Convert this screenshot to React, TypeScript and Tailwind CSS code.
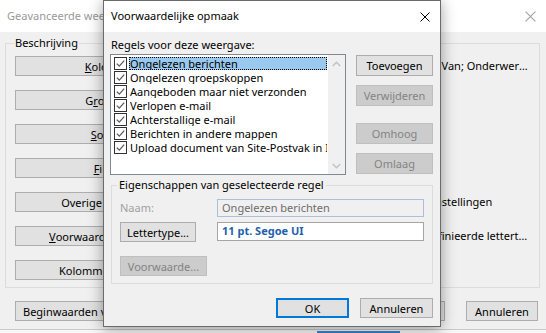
import React from "react";

const FONT = "font-['Noto_Sans',sans-serif]";

function Btn({
  children,
  className = "",
  disabled = false,
  primary = false,
}: {
  children: React.ReactNode;
  className?: string;
  disabled?: boolean;
  primary?: boolean;
}) {
  const tone = disabled
    ? "bg-[#cccccc] border border-[#bfbfbf] text-[#838383]"
    : primary
    ? "bg-[#e1e1e1] border-2 border-[#0078d7] text-black"
    : "bg-[#e1e1e1] border border-[#adadad] text-black";
  return (
    <div
      className={`flex items-center justify-center whitespace-nowrap overflow-hidden text-[11px] leading-none ${tone} ${className}`}
    >
      {children}
    </div>
  );
}

function CheckBox() {
  return (
    <svg width="13" height="13" viewBox="0 0 13 13" className="shrink-0">
      <rect x="0.5" y="0.5" width="12" height="12" fill="#ffffff" stroke="#333333" />
      <path d="M2.8 6.6 L5.3 9.1 L10.2 3.6" fill="none" stroke="#5c5c5c" strokeWidth="1.3" />
    </svg>
  );
}

function Chevron({ up }: { up: boolean }) {
  return (
    <svg width="9" height="6" viewBox="0 0 9 6">
      <path
        d={up ? "M0.8 5 L4.5 1.3 L8.2 5" : "M0.8 1 L4.5 4.7 L8.2 1"}
        fill="none"
        stroke="#c2c2c2"
        strokeWidth="1.4"
      />
    </svg>
  );
}

function CloseX({ color, size = 10 }: { color: string; size?: number }) {
  return (
    <svg width={size} height={size} viewBox="0 0 10 10">
      <path d="M0.5 0.5 L9.5 9.5 M9.5 0.5 L0.5 9.5" stroke={color} strokeWidth="1" />
    </svg>
  );
}

const rules = [
  "Ongelezen berichten",
  "Ongelezen groepskoppen",
  "Aangeboden maar niet verzonden",
  "Verlopen e-mail",
  "Achterstallige e-mail",
  "Berichten in andere mappen",
  "Upload document van Site-Postvak in In",
];

const bgRows: { label: React.ReactNode; desc: string }[] = [
  { label: <><u>K</u>olommen...</>, desc: "Pictogram; Vlag; Bijlage; Van; Onderwerp; Ontvangen; Grootte" },
  { label: <>G<u>r</u>oeperen...</>, desc: "Geen" },
  { label: <><u>S</u>orteren...</>, desc: "Ontvangen" },
  { label: <><u>F</u>ilteren...</>, desc: "Uit" },
  { label: <>Overige instellingen...</>, desc: "Lettertypen en andere instellingen" },
  { label: <><u>V</u>oorwaardelijke opmaak...</>, desc: "Door de gebruiker gedefinieerde lettertypen voor elk bericht" },
  { label: <>Kolommen opmaken...</>, desc: "" },
];

export default function App() {
  return (
    <div className={`relative w-[546px] h-[333px] overflow-hidden bg-[#f0f0f0] text-black ${FONT}`}>
      {/* Background window */}
      <div className="flex flex-col h-full">
        <div className="h-[32px] bg-white flex items-center justify-between pl-[7px] pr-[10px]">
          <span className="text-[11px] text-[#999999]">Geavanceerde weergave-instellingen: Compact</span>
          <CloseX color="#a0a0a0" size={11} />
        </div>
        <div className="flex-1 flex flex-col">
          <fieldset className="mt-[3px] ml-[5px] w-[535px] h-[253px] border border-[#dcdcdc] pl-[9px] pr-[6px]">
            <legend className="ml-[-1px] px-[1px] text-[11px] leading-[16px]">Beschrijving</legend>
            <div className="mt-[5px] flex flex-col gap-[14px]">
              {bgRows.map((r, i) => (
                <div key={i} className="flex items-center h-[20px]">
                  <Btn className="w-[205px] h-[20px]">{r.label}</Btn>
                  <div className="ml-[94px] w-[218px] truncate text-[11px] leading-[16px]">{r.desc}</div>
                </div>
              ))}
            </div>
          </fieldset>
          <div className="mt-[13px] flex items-center h-[20px] pl-[15px] pr-[8px]">
            <Btn className="h-[20px] px-[7px]">Beginwaarden van weergave herstellen</Btn>
            <div className="flex-1" />
            <Btn className="w-[73px] h-[20px]">OK</Btn>
            <Btn className="ml-[21px] w-[72px] h-[20px]">Annuleren</Btn>
          </div>
          <div className="flex-1" />
          <div className="h-[4px] border-t border-[#c8c8c8] bg-[#f7f7f7] flex items-end">
            <div className="ml-[317px] w-[83px] h-[2px] bg-[#3d84cc]" />
          </div>
        </div>
      </div>

      {/* Dialog: Voorwaardelijke opmaak */}
      <div className="absolute left-[103px] top-0 w-[338px] h-[327px] border border-[#6b6b6b] bg-[#f0f0f0] flex flex-col shadow-[0_2px_14px_rgba(0,0,0,0.38)]">
        <div className="h-[31px] bg-white flex items-center justify-between pl-[7px] pr-[10px] shrink-0">
          <span className="text-[11px]">Voorwaardelijke opmaak</span>
          <CloseX color="#000000" />
        </div>
        <div className="flex-1 flex flex-col pl-[6px] pr-[7px]">
          <div className="pt-[5px] pl-[1px] text-[11px] leading-[16px]">Regels voor deze weergave:</div>
          <div className="mt-[1px] flex">
            {/* List box */}
            <div className="w-[236px] h-[121px] border border-[#828790] bg-white flex">
              <div className="flex-1 min-w-0 pt-[1px] flex flex-col">
                {rules.map((r, i) => (
                  <div key={i} className="h-[14px] flex items-start pt-[1px] pl-[3px] pr-[1px]">
                    <CheckBox />
                    <div
                      className={`ml-[2px] h-[13px] flex-1 min-w-0 flex items-center pl-[1px] whitespace-nowrap overflow-hidden text-[11px] leading-none ${
                        i === 0 ? "bg-[#99c9ef] outline outline-1 outline-dotted outline-offset-[-1px] outline-black" : ""
                      }`}
                    >
                      {r}
                    </div>
                  </div>
                ))}
              </div>
              <div className="w-[17px] bg-[#f0f0f0] flex flex-col justify-between">
                <div className="h-[17px] flex items-center justify-center">
                  <Chevron up />
                </div>
                <div className="h-[17px] flex items-center justify-center">
                  <Chevron up={false} />
                </div>
              </div>
            </div>
            {/* Buttons */}
            <div className="ml-[10px] mt-[1px] w-[77px] flex flex-col">
              <Btn className="h-[21px]">Toevoegen</Btn>
              <Btn disabled className="h-[21px] mt-[9px]">Verwijderen</Btn>
              <Btn disabled className="h-[21px] mt-[17px]">Omhoog</Btn>
              <Btn disabled className="h-[21px] mt-[9px]">Omlaag</Btn>
            </div>
          </div>

          <fieldset className="mt-[2px] ml-[1px] w-[322px] h-[107px] border border-[#dcdcdc] px-[8px]">
            <legend className="ml-[-3px] px-[2px] text-[11px] leading-[16px]">
              Eigenschappen van geselecteerde regel
            </legend>
            <div className="mt-[6px] flex items-center h-[18px]">
              <div className="w-[97px] text-[11px] text-[#a0a0a0]">Naam:</div>
              <div className="w-[207px] h-[18px] border border-[#abc0d8] bg-[#f0f0f0] flex items-center pl-[4px] text-[11px] text-[#6d6d6d] whitespace-nowrap overflow-hidden">
                Ongelezen berichten
              </div>
            </div>
            <div className="mt-[5px] flex items-start h-[20px]">
              <Btn className="w-[76px] h-[20px]">Lettertype...</Btn>
              <div className="ml-[21px] w-[207px] h-[19px] border border-[#a5a5a5] bg-white flex items-center pl-[4px] text-[11px] font-bold text-[#1f5fae] whitespace-nowrap overflow-hidden">
                11 pt. Segoe UI
              </div>
            </div>
            <div className="mt-[14px] flex">
              <Btn disabled className="w-[87px] h-[20px]">Voorwaarde...</Btn>
            </div>
          </fieldset>

          <div className="mt-[14px] flex justify-end gap-[11px]">
            <Btn primary className="w-[73px] h-[20px]">OK</Btn>
            <Btn className="w-[73px] h-[20px]">Annuleren</Btn>
          </div>
        </div>
      </div>
    </div>
  );
}
